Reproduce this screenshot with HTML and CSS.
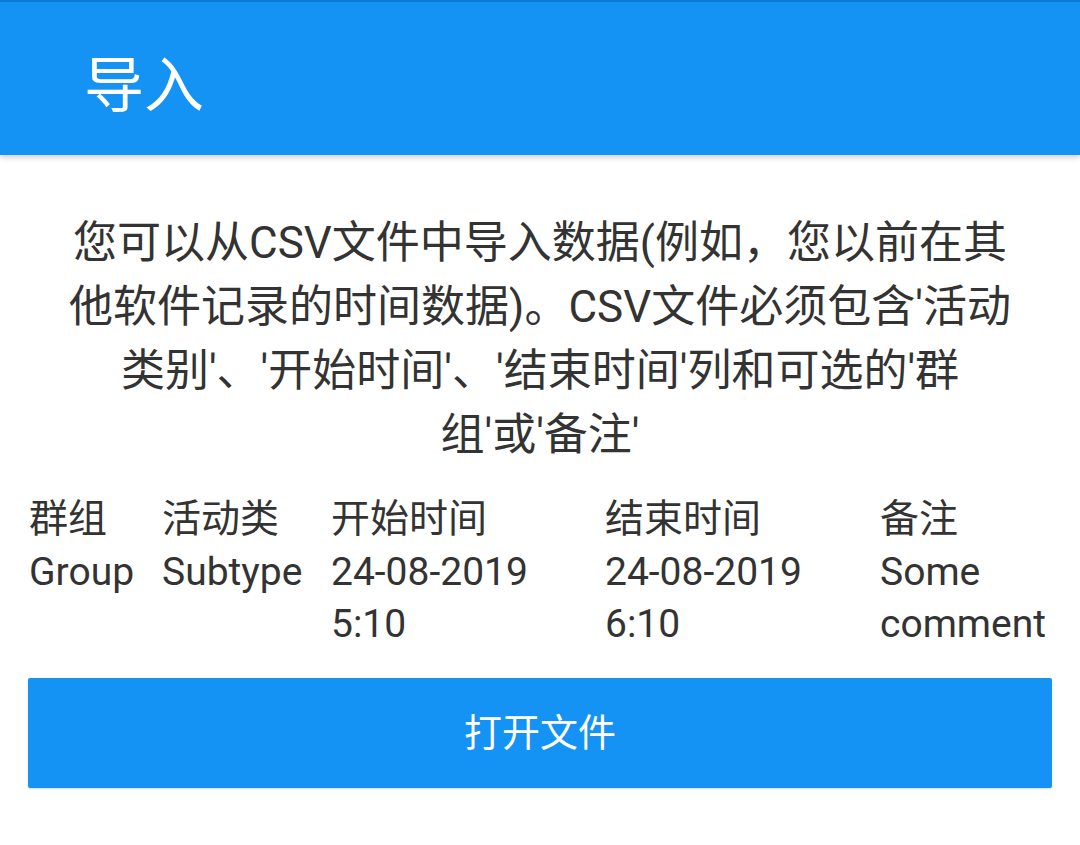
FILE: index.html
```html
<!DOCTYPE html>
<html lang="zh-CN">
<head>
<meta charset="utf-8">
<title>导入</title>
<link rel="stylesheet" href="styles.css">
</head>
<body>
<header class="appbar">
  <h1 class="appbar-title">导入</h1>
</header>
<main class="content">
  <p class="intro">您可以从CSV文件中导入数据(例如，您以前在其他软件记录的时间数据)。CSV文件必须包含'活动类别'、'开始时间'、'结束时间'列和可选的'群组'或'备注'</p>
  <div class="sample">
    <div class="cell">群组</div>
    <div class="cell">活动类</div>
    <div class="cell">开始时间</div>
    <div class="cell">结束时间</div>
    <div class="cell">备注</div>
    <div class="cell">Group</div>
    <div class="cell">Subtype</div>
    <div class="cell">24-08-2019<br>5:10</div>
    <div class="cell">24-08-2019<br>6:10</div>
    <div class="cell">Some<br>comment</div>
  </div>
  <button class="open-btn" type="button">打开文件</button>
</main>
</body>
</html>
```

FILE: styles.css
```css
html, body {
  margin: 0;
  padding: 0;
  background: #ffffff;
}

body {
  width: 1080px;
  height: 845px;
  overflow: hidden;
  font-family: Roboto, "Noto Sans CJK SC", sans-serif;
  color: #333333;
}

.appbar {
  height: 153px;
  background: #1493f5;
  border-top: 2px solid #0b7bd6;
  display: flex;
  align-items: center;
  padding-left: 84px;
  box-shadow: 0 2px 6px rgba(0, 0, 0, 0.22);
  position: relative;
  z-index: 1;
}

.appbar-title {
  margin: 0;
  font-family: "Noto Sans CJK SC", sans-serif;
  font-weight: 400;
  font-size: 60px;
  line-height: 1;
  color: #ffffff;
  padding-top: 4px;
}

.content {
  display: flex;
  flex-direction: column;
  padding: 56px 28px 0;
}

.intro {
  margin: 0 32px;
  font-size: 44px;
  line-height: 64px;
  text-align: center;
  color: #333333;
}

.sample {
  margin-top: 26px;
  display: grid;
  grid-template-columns: 133px 169px 274px 275px 1fr;
  padding-left: 1px;
  font-size: 39px;
  line-height: 52.5px;
  color: #333333;
}

.cell {
  white-space: nowrap;
  overflow: hidden;
}

.open-btn {
  margin-top: 27px;
  height: 110px;
  border: none;
  border-radius: 2px;
  background: #1493f5;
  color: #ffffff;
  font-family: "Noto Sans CJK SC", sans-serif;
  font-size: 38px;
  padding: 0 0 6px;
  box-shadow: 0 1px 2px rgba(0, 0, 0, 0.15);
}
```
